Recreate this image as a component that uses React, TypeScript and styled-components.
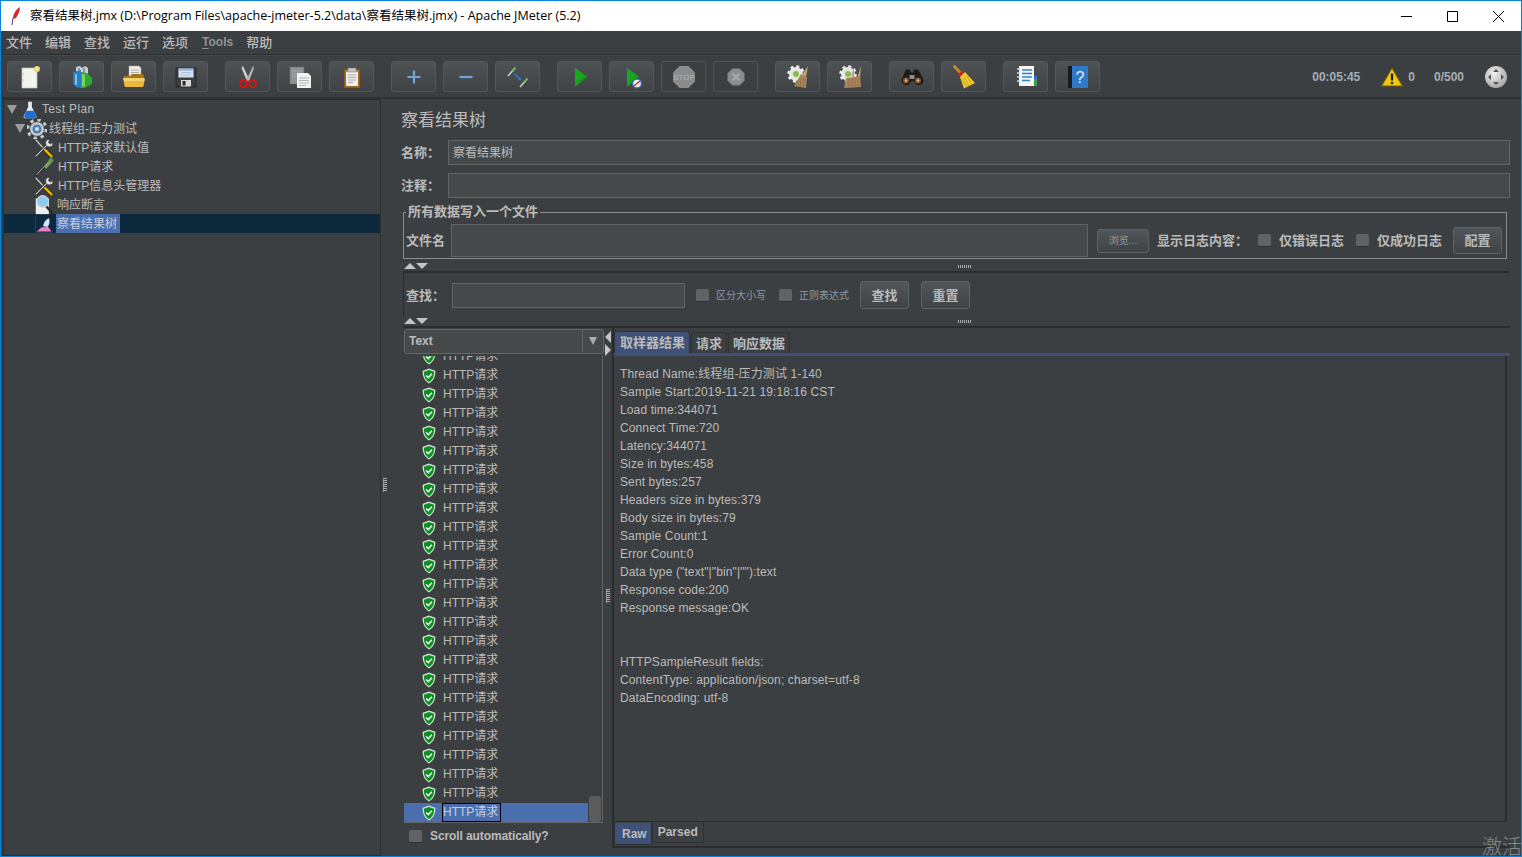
import React from "react";
import styled, { createGlobalStyle } from "styled-components";

const FONT = `"Liberation Sans", "Noto Sans CJK SC", sans-serif`;

const GlobalStyle = createGlobalStyle`
  html, body { margin: 0; padding: 0; background: #3c3f41; }
  body { font-family: ${FONT}; color: #bbbbbb; font-size: 12px; }
`;

// window frame
const Frame = styled.div`
  position: relative;
  box-sizing: border-box;
  width: 1522px;
  height: 857px;
  border: 1px solid #0a84d8;
  background: #3c3f41;
  display: flex;
  flex-direction: column;
  overflow: hidden;
`;
const TitleBar = styled.div`
  height: 30px;
  flex: none;
  background: #fff;
  display: flex;
  align-items: center;
  color: #000;
  font-family: "Open Sans", "Noto Sans CJK SC", sans-serif;
  font-size: 12.5px;
  padding-left: 8px;
`;
const TitleText = styled.span`
  margin-left: 7px;
  flex: 1;
  padding-bottom: 4px;
`;
const WinButton = styled.div`
  width: 46px;
  height: 30px;
  display: flex;
  align-items: center;
  justify-content: center;
`;
const MenuBar = styled.div`
  height: 24px;
  flex: none;
  box-sizing: border-box;
  display: flex;
  align-items: center;
  gap: 13px;
  padding: 0 0 2px 5px;
  border-bottom: 1px solid #2c2e2f;
  font-size: 13px;
`;
const MenuItem = styled.span<{ $dim?: boolean }>`
  color: ${(p) => (p.$dim ? "#8f9396" : "#bbbbbb")};
  font-weight: ${(p) => (p.$dim ? 700 : 500)};
  font-size: ${(p) => (p.$dim ? "12px" : "13px")};
  margin-left: ${(p) => (p.$dim ? 1 : 0)}px;
  u { text-underline-offset: 2px; }
`;
const ToolBar = styled.div`
  height: 44px;
  flex: none;
  box-sizing: border-box;
  display: flex;
  align-items: center;
  padding: 0 14px 0 6px;
  border-top: 1px solid #45484a;
  border-bottom: 2px solid #2e3031;
`;
const ToolGroup = styled.div`
  display: flex;
  gap: 7px;
  margin-right: 17px;
`;
const ToolButton = styled.div<{ $off?: boolean }>`
  box-sizing: border-box;
  width: 45px;
  height: 31px;
  border-radius: 3px;
  border: 1px solid ${(p) => (p.$off ? "#505456" : "#54585a")};
  background: ${(p) =>
    p.$off ? "#3c3f41" : "linear-gradient(#4d5254, #404345)"};
  display: flex;
  align-items: center;
  justify-content: center;
`;
const Status = styled.div`
  margin-left: auto;
  display: flex;
  align-items: center;
  color: #a4aeb8;
  font-size: 12px;
  font-weight: 700;
`;
const StatusText = styled.span<{ $gap: number; $left?: number }>`
  margin-right: ${(p) => p.$gap}px;
  margin-left: ${(p) => p.$left ?? 0}px;
`;

// main split
const Main = styled.div`
  flex: 1;
  display: flex;
  min-height: 0;
`;
const TreePane = styled.div`
  box-sizing: border-box;
  width: 378px;
  margin-left: 2px;
  border: 1px solid #2b2d2e;
`;
const TreeRow = styled.div<{ $depth: number; $selected?: boolean }>`
  display: flex;
  align-items: center;
  height: 19px;
  padding-left: ${(p) => p.$depth}px;
  background: ${(p) => (p.$selected ? "#0d293e" : "transparent")};
`;
const TreeLabel = styled.span<{ $selected?: boolean; $latin?: boolean }>`
  padding: 0 3px 0 1px;
  height: 19px;
  line-height: ${(p) => (p.$latin ? 19 : 21)}px;
  letter-spacing: ${(p) => (p.$latin ? ".35px" : "0")};
  white-space: nowrap;
  color: ${(p) => (p.$selected ? "#c5cfe0" : "#bbbbbb")};
  background: ${(p) => (p.$selected ? "#4b6eaf" : "transparent")};
`;
const IconSlot = styled.span<{ $left?: number; $right: number }>`
  display: flex;
  flex: none;
  margin: 0 ${(p) => p.$right}px 0 ${(p) => p.$left ?? 0}px;
`;
const Caret = styled.span`
  width: 0;
  height: 0;
  border-left: 5px solid transparent;
  border-right: 5px solid transparent;
  border-top: 9px solid #9a9c9e;
  margin-right: 2px;
`;
const VGrip = styled.div`
  width: 10px;
  flex: none;
  display: flex;
  align-items: center;
  justify-content: center;
  padding: 14px 2px 0 0;
  box-sizing: border-box;
`;
const GripV = styled.div`
  width: 3px;
  height: 14px;
  background: repeating-linear-gradient(#a9abad 0 1px, #3c3f41 1px 2px);
  border-left: 1px dotted #8b8d8f;
`;
const RightPane = styled.div`
  flex: 1;
  min-width: 0;
  display: flex;
  flex-direction: column;
  padding: 0 11px 0 10px;
`;
const PaneTitle = styled.div`
  font-size: 17px;
  height: 22px;
  line-height: 22px;
  margin: 11px 0 8px;
`;
const FormRow = styled.div`
  display: flex;
  align-items: center;
  height: 25px;
  margin-bottom: 8px;
`;
const Label = styled.span<{ $w?: number }>`
  font-size: 13px;
  font-weight: 700;
  white-space: nowrap;
  color: #bbbbbb;
  padding-bottom: 2px;
  ${(p) => (p.$w ? `width: ${p.$w}px; flex: none;` : "")}
`;
const TextBox = styled.div<{ $w?: number; $h?: number }>`
  box-sizing: border-box;
  background: #45494a;
  border: 1px solid #646464;
  height: ${(p) => p.$h ?? 25}px;
  color: #bbbbbb;
  line-height: 25px;
  padding-left: 4px;
  ${(p) => (p.$w ? `width: ${p.$w}px; flex: none;` : "flex: 1;")}
`;
const FieldSet = styled.fieldset`
  box-sizing: border-box;
  margin: -2px 3px 0 2px;
  height: 55px;
  padding: 3px 4px 0 2px;
  border: 1px solid #8a8c8e;
  min-inline-size: 0;
`;
const Legend = styled.legend`
  font-size: 13px;
  font-weight: 700;
  padding: 0 2px 1px;
  margin-left: 0;
  line-height: 16px;
`;
const FieldRow = styled.div`
  height: 33px;
  display: flex;
  align-items: center;
`;
const SmallButton = styled.div<{ $w: number; $h: number; $left: number; $small?: boolean }>`
  box-sizing: border-box;
  flex: none;
  width: ${(p) => p.$w}px;
  height: ${(p) => p.$h}px;
  margin-left: ${(p) => p.$left}px;
  padding-bottom: 2px;
  border: 1px solid #5e6264;
  border-radius: 3px;
  background: linear-gradient(#50565a, #3f4345);
  display: flex;
  align-items: center;
  justify-content: center;
  font-size: ${(p) => (p.$small ? 10 : 13)}px;
  font-weight: ${(p) => (p.$small ? 400 : 700)};
  color: ${(p) => (p.$small ? "#8f9aa0" : "#bbbbbb")};
`;
const Check = styled.span<{ $left: number }>`
  box-sizing: border-box;
  flex: none;
  width: 13px;
  height: 13px;
  margin-left: ${(p) => p.$left}px;
  background: #616263;
  border-radius: 2px;
  border-bottom: 1px solid #2f3031;
`;
const CheckText = styled.span<{ $left: number; $small?: boolean }>`
  margin-left: ${(p) => p.$left}px;
  padding-bottom: 2px;
  font-size: ${(p) => (p.$small ? 10 : 13)}px;
  font-weight: ${(p) => (p.$small ? 400 : 700)};
  color: ${(p) => (p.$small ? "#8e9aa6" : "#bbbbbb")};
  white-space: nowrap;
`;
const ScrollLabel = styled(CheckText)`
  font-size: 12px;
  letter-spacing: -0.1px;
  padding-bottom: 0;
`;
const HSplit = styled.div<{ $h: number; $top: number; $bottom: number }>`
  height: ${(p) => p.$h}px;
  flex: none;
  box-sizing: border-box;
  margin-left: 2px;
  padding: ${(p) => p.$top}px 538px ${(p) => p.$bottom}px 0;
  border-bottom: 2px solid #2a2c2d;
  display: flex;
  align-items: center;
  justify-content: space-between;
`;
const Arrows = styled.div`
  display: flex;
  margin-left: 1px;
`;
const ArrowUp = styled.span`
  width: 0;
  height: 0;
  border-left: 6px solid transparent;
  border-right: 6px solid transparent;
  border-bottom: 6px solid #c3c5c7;
`;
const ArrowDown = styled.span`
  width: 0;
  height: 0;
  border-left: 6px solid transparent;
  border-right: 6px solid transparent;
  border-top: 6px solid #c3c5c7;
`;
const GripH = styled.div`
  width: 14px;
  height: 3px;
  background: repeating-linear-gradient(90deg, #a9abad 0 1px, #3c3f41 1px 2px);
`;
const SearchRow = styled.div`
  height: 44px;
  flex: none;
  box-sizing: border-box;
  margin-left: 2px;
  padding-left: 2px;
  border-left: 1px solid #2a2c2d;
  display: flex;
  align-items: center;
`;

// results area
const Lower = styled.div`
  flex: 1;
  min-height: 0;
  display: flex;
  margin-left: 2px;
  padding-bottom: 1px;
`;
const ListCol = styled.div`
  width: 201px;
  flex: none;
  display: flex;
  flex-direction: column;
  padding-top: 1px;
  padding-left: 1px;
  box-sizing: border-box;
`;
const Combo = styled.div`
  box-sizing: border-box;
  height: 25px;
  flex: none;
  border: 1px solid #646668;
  border-radius: 3px;
  background: #45494a;
  display: flex;
  align-items: center;
  justify-content: space-between;
  font-weight: 700;
  padding: 0 0 1px 4px;
`;
const ComboArrow = styled.div`
  width: 20px;
  height: 100%;
  border-left: 1px solid #646668;
  display: flex;
  align-items: center;
  justify-content: center;
  &::after {
    content: "";
    border-left: 4px solid transparent;
    border-right: 4px solid transparent;
    border-top: 8px solid #a9abad;
  }
`;
const ListBox = styled.div`
  box-sizing: border-box;
  position: relative;
  height: 467px;
  margin: 2px 1px 1px 0;
  border-right: 1px solid #626466;
  border-bottom: 1px solid #626466;
  overflow: hidden;
  display: flex;
  flex-direction: column;
  justify-content: flex-end;
`;
const ResultRow = styled.div<{ $selected?: boolean }>`
  flex: none;
  height: 19px;
  margin-right: 14px;
  display: flex;
  align-items: center;
  padding-left: 18px;
  background: ${(p) => (p.$selected ? "#4b6eaf" : "transparent")};
`;
const ResultLabel = styled.span<{ $selected?: boolean }>`
  box-sizing: border-box;
  margin-left: 6px;
  height: 19px;
  line-height: 17px;
  padding: 0 2px 0 0;
  border: 1px solid ${(p) => (p.$selected ? "#000" : "transparent")};
  color: ${(p) => (p.$selected ? "#c5cfe0" : "#bbbbbb")};
`;
const Thumb = styled.div`
  position: absolute;
  right: 1px;
  bottom: 0;
  width: 12px;
  height: 26px;
  border-radius: 3px;
  background: #5a5c5e;
`;
const ScrollCheck = styled.div`
  display: flex;
  align-items: center;
  height: 24px;
  padding-left: 5px;
`;
const VSplit = styled.div`
  width: 8px;
  flex: none;
  display: flex;
  flex-direction: column;
  align-items: center;
  padding-top: 3px;
`;
const ArrowLeft = styled.span`
  width: 0;
  height: 0;
  margin: 0 1px 1px 0;
  border-top: 6px solid transparent;
  border-bottom: 6px solid transparent;
  border-right: 6px solid #c3c5c7;
`;
const ArrowRight = styled.span`
  width: 0;
  height: 0;
  margin: 0 1px 0 0;
  border-top: 6px solid transparent;
  border-bottom: 6px solid transparent;
  border-left: 6px solid #c3c5c7;
`;
const VSplitGrip = styled(GripV)`
  margin-top: 233px;
`;
const DetailCol = styled.div`
  flex: 1;
  min-width: 0;
  box-sizing: border-box;
  display: flex;
  flex-direction: column;
  border-left: 2px solid #2a2c2d;
  padding-top: 3px;
  margin-bottom: 7px;
  border-bottom: 2px solid #2a2c2d;
`;
const Tabs = styled.div`
  height: 22px;
  flex: none;
  display: flex;
  gap: 1px;
  align-items: flex-end;
`;
const Tab = styled.div<{ $active?: boolean }>`
  box-sizing: border-box;
  height: ${(p) => (p.$active ? 22 : 21)}px;
  padding: 0 4px ${(p) => (p.$active ? 3 : 1)}px ${(p) => (p.$active ? 5 : 4)}px;
  display: flex;
  align-items: center;
  font-size: 13px;
  font-weight: 700;
  border-radius: 3px 3px 0 0;
  border: 1px solid #2f3132;
  border-bottom: none;
  background: ${(p) => (p.$active ? "#3f5176" : "#3c3f41")};
  color: #bbbbbb;
`;
const TabLine = styled.div`
  height: 3px;
  flex: none;
  background: #3f5176;
`;
const Detail = styled.div`
  box-sizing: border-box;
  height: 466px;
  flex: none;
  margin-right: 3px;
  border-right: 2px solid #2a2c2d;
  border-bottom: 1px solid #2a2c2d;
  padding: 9px 0 0 6px;
  line-height: 18px;
  letter-spacing: 0.12px;
  white-space: pre;
`;
const BottomTabs = styled.div`
  display: flex;
  height: 23px;
`;
const BottomTab = styled.div<{ $active?: boolean }>`
  box-sizing: border-box;
  height: ${(p) => (p.$active ? 22 : 21)}px;
  padding: 0 ${(p) => (p.$active ? 4 : 5)}px 0 ${(p) => (p.$active ? 7 : 5)}px;
  margin-top: ${(p) => (p.$active ? 1 : 0)}px;
  display: flex;
  align-items: center;
  font-weight: 700;
  border-radius: 0 0 3px 3px;
  border: 1px solid #2f3132;
  border-top: none;
  background: ${(p) => (p.$active ? "#3f5176" : "#3c3f41")};
`;
const Watermark = styled.div`
  position: absolute;
  right: -1px;
  bottom: -3px;
  font-size: 20px;
  line-height: 24px;
  color: #85888a;
  font-weight: 300;
`;

// icons
const Ico = ({ children, size = 24 }: { children: React.ReactNode; size?: number }) => (
  <svg width={size} height={size} viewBox="0 0 24 24">
    {children}
  </svg>
);
const NewIcon = () => (
  <Ico>
    <path d="M4 3h15v20H4z" fill="#f4f4ee" stroke="#c4c4b8" strokeWidth=".7" />
    <circle cx="5.5" cy="9" r=".6" fill="#999" />
    <circle cx="5.5" cy="15" r=".6" fill="#999" />
    <circle cx="19" cy="4" r="3" fill="#ecd66a" />
    <circle cx="19" cy="4" r="1.4" fill="#fff6c0" />
  </Ico>
);
const TemplateIcon = () => (
  <Ico>
    <path d="M6 2l4-1 2 2 3-2 3 2v8H6z" fill="#c9cfd4" />
    <path d="M8 3h2v8H8zM13 3h2v8h-2z" fill="#8e979d" />
    <path d="M3 7l8-2v18l-5-1-3-3z" fill="#2a7fc0" />
    <path d="M5 9.500l2-.6V20l-2-.6z" fill="#7fc4ea" />
    <path d="M11 7l6 1 5 5v6l-7 4h-4z" fill="#2fa832" />
    <path d="M12 9l3 .6V21l-3 .8z" fill="#7dd35e" />
  </Ico>
);
const OpenIcon = () => (
  <Ico>
    <path d="M7 1h10l2 2v11H7z" fill="#eeeeea" stroke="#aaa" strokeWidth=".5" />
    <path d="M9 5h8M9 7.500h8M9 10h8" stroke="#9a9a9a" strokeWidth=".8" />
    <path d="M2 11h6l2-2h11l1 3v9H2z" fill="#a8761a" />
    <path d="M1 13h21l1 1-2 8H3z" fill="#edb93f" />
    <path d="M1 13h21l.5 3H2z" fill="#f5d271" />
  </Ico>
);
const SaveIcon = () => (
  <Ico>
    <path d="M2 3h20v19H2z" fill="#3a3d40" stroke="#1f2022" strokeWidth=".8" />
    <path d="M4.500 3.500h15v9h-15z" fill="#d6e2f2" />
    <path d="M4.500 3.500h15v2h-15z" fill="#8cb0dc" />
    <path d="M7 7.500h10M7 10h10" stroke="#a7b9d2" strokeWidth=".8" />
    <path d="M7 15h10v6.500H7z" fill="#d8d8d8" />
    <path d="M8.500 16h3v4.500h-3z" fill="#2a2a2a" />
  </Ico>
);
const CutIcon = () => (
  <Ico>
    <path d="M7 1l6.500 14-2.500 1L5.500 3z" fill="#d5d5d5" stroke="#888" strokeWidth=".4" />
    <path d="M17 1l-6.500 14 2.500 1 5-13z" fill="#bdbdbd" stroke="#777" strokeWidth=".4" />
    <circle cx="7.500" cy="18.500" r="3.600" fill="none" stroke="#d01818" strokeWidth="2.200" />
    <circle cx="16.500" cy="18.500" r="3.600" fill="none" stroke="#d01818" strokeWidth="2.200" />
  </Ico>
);
const CopyIcon = () => (
  <Ico>
    <path d="M2 2h14v17H2z" fill="#8f9294" stroke="#6d6f71" strokeWidth=".6" />
    <path d="M4 6h10M4 9h10M4 12h10" stroke="#a9abad" strokeWidth=".8" />
    <path d="M9 8h11l3 3v12H9z" fill="#f2f2f0" />
    <path d="M11 13h10M11 15.500h10M11 18h10M11 20.500h7" stroke="#a3a3a3" strokeWidth=".8" />
  </Ico>
);
const PasteIcon = () => (
  <Ico>
    <path d="M4 4h16v19H4z" fill="#a8661e" stroke="#6a3f10" strokeWidth=".6" />
    <path d="M6 6.500h12v14.500H6z" fill="#eeeeec" />
    <path d="M8 3h8v2l1 2H7l1-2z" fill="#c6c6c6" stroke="#777" strokeWidth=".5" />
    <path d="M8 10h8M8 12.500h8M8 15h8M8 17.500h5" stroke="#9a9a9a" strokeWidth=".8" />
  </Ico>
);
const PlusIcon = () => (
  <Ico>
    <path d="M5.500 12h13M12 5.500v13" stroke="#6fa5dd" strokeWidth="2.200" />
  </Ico>
);
const MinusIcon = () => (
  <Ico>
    <path d="M5.500 12h13" stroke="#6fa5dd" strokeWidth="2.200" />
  </Ico>
);
const ToggleIcon = () => (
  <Ico>
    <path d="M2 11l7-8" stroke="#c9cbc8" strokeWidth="1.700" />
    <path d="M6.500 6l3-3.500" stroke="#6fae62" strokeWidth="2" />
    <path d="M14 22l7-8" stroke="#c9cbc8" strokeWidth="1.700" />
    <path d="M18.500 17l3-3.500" stroke="#6fae62" strokeWidth="2" />
    <path d="M8.500 9l5.500 5" stroke="#2d7fe0" strokeWidth="1.400" />
    <path d="M15.500 15.500l-3.500-.5 2.500-2.500z" fill="#2d7fe0" />
  </Ico>
);
const PlayIcon = ({ small }: { small?: boolean }) => (
  <Ico>
    <defs>
      <linearGradient id="pl" x1="0" x2="1" y1="0" y2="1">
        <stop offset="0" stopColor="#25c325" />
        <stop offset="1" stopColor="#0a7d12" />
      </linearGradient>
    </defs>
    <path d="M7 3l12 9-12 10z" fill="url(#pl)" />
    <path d="M7 3l12 9H7z" fill="#17a81c" />
    {small && (
      <>
        <circle cx="17" cy="18.500" r="4.400" fill="#f2f2f2" stroke="#2e6fd0" strokeWidth="1.300" />
        <path d="M14 21l6-5" stroke="#d02020" strokeWidth="1.200" />
      </>
    )}
  </Ico>
);
const StopIcon = () => (
  <Ico>
    <path d="M7.500 1h9L23 7.500v9L16.500 23h-9L1 16.500v-9z" fill="#8b8b8b" />
    <text x="12" y="15" textAnchor="middle" fontSize="8" fontWeight="700" fontFamily="Liberation Sans" fill="#a6a6a6">
      STOP
    </text>
  </Ico>
);
const ShutIcon = () => (
  <Ico>
    <path d="M8.500 3.500h7l5 5v7l-5 5h-7l-5-5v-7z" fill="#8b8b8b" />
    <path d="M8.500 8.500l7 7M15.500 8.500l-7 7" stroke="#a9a9a9" strokeWidth="2.200" />
  </Ico>
);
const GearBase = () => (
  <>
    <circle cx="10" cy="9" r="7" fill="#e7e7e4" />
    <circle cx="10" cy="9" r="7.500" fill="none" stroke="#f0f0ec" strokeWidth="2.500" strokeDasharray="3 2.900" />
    <circle cx="10" cy="9" r="3" fill="#86c04c" />
  </>
);
const ClearIcon = () => (
  <Ico>
    <GearBase />
    <path d="M22 1l-6 9 4 2z" fill="#c0a47c" />
    <path d="M15 9l6 3-1 11-12-2z" fill="#a9855c" />
    <path d="M12 15l-1 7M15 13l-1 9M18 13l-1 10" stroke="#8b6a45" strokeWidth=".7" />
  </Ico>
);
const ClearAllIcon = () => (
  <Ico>
    <GearBase />
    <path d="M16 2l-3 9 3 1zM23 1l-4 12 3 1z" fill="#bfa27a" />
    <path d="M8 13l14-2 1 11-17 1z" fill="#a9855c" />
    <path d="M11 14v8M14 13v10M17 13v10M20 13v9" stroke="#8b6a45" strokeWidth=".7" />
  </Ico>
);
const BinocularsIcon = () => (
  <Ico>
    <path d="M6 4.500h4l1 3h2l1-3h4l5.500 10a4.800 4.800 0 1 1-9.500 1.500h-3a4.800 4.800 0 1 1-9.500-1.500z" fill="#1b1b1b" />
    <path d="M9.500 10h5v4h-5z" fill="#8c8c8c" />
    <circle cx="6" cy="15.500" r="3" fill="#8b5a34" />
    <circle cx="18" cy="15.500" r="3" fill="#8b5a34" />
    <circle cx="6" cy="15.500" r="1.200" fill="#d6b48e" />
    <circle cx="18" cy="15.500" r="1.200" fill="#d6b48e" />
  </Ico>
);
const BroomIcon = () => (
  <Ico>
    <path d="M2.500 1.500l6.500 7" stroke="#c08a30" strokeWidth="3" strokeLinecap="round" />
    <path d="M6 9.500l4-4 3 3-4 4z" fill="#d21f1f" />
    <path d="M8 12l5-5 10 11-11 5.500z" fill="#f0ca2e" />
    <path d="M12 12l5 9M10.500 14l4 8M15 11l4.500 8" stroke="#b79417" strokeWidth=".7" />
  </Ico>
);
const LogIcon = () => (
  <Ico>
    <path d="M5 1h15v20H5z" fill="#f6f6f6" />
    <path d="M8 5h10M8 8.500h10M8 12h10M8 15.500h8" stroke="#2d7fd8" strokeWidth="1.300" />
    <path d="M3 4h3M3 8h3M3 12h3M3 16h3" stroke="#d8d8d8" strokeWidth="1.500" />
    <path d="M20 14h3v7h-3z" fill="#39a04a" />
    <path d="M20 11h3v3h-3z" fill="#2d70c0" />
  </Ico>
);
const HelpIcon = () => (
  <Ico>
    <path d="M2 1h5v22H2z" fill="#181b20" />
    <path d="M6 1h16v22H6z" fill="#2f79c8" />
    <text x="14" y="17.500" textAnchor="middle" fontSize="16" fontFamily="Liberation Sans" fill="#e6f0fa">
      ?
    </text>
  </Ico>
);
const WarnIcon = () => (
  <svg width="22" height="20" viewBox="0 0 22 20">
    <path d="M11 1l10.500 18H.5z" fill="#f2c80f" stroke="#6d5a10" strokeWidth="1.200" />
    <path d="M11 6.500v7" stroke="#1b1b1b" strokeWidth="2.200" />
    <circle cx="11" cy="16" r="1.300" fill="#1b1b1b" />
  </svg>
);
const RemoteIcon = () => (
  <svg width="22" height="22" viewBox="0 0 22 22">
    <defs>
      <radialGradient id="rm" cx=".4" cy=".35" r=".8">
        <stop offset="0" stopColor="#f0f0f0" />
        <stop offset="1" stopColor="#9a9a9a" />
      </radialGradient>
    </defs>
    <circle cx="11" cy="11" r="11" fill="url(#rm)" />
    <path d="M11 3l3 3H8zM11 19l3-3H8zM3 11l3-3v6zM19 11l-3-3v6z" fill="#555" />
  </svg>
);
const ShieldIcon = () => (
  <svg width="14" height="16" viewBox="0 0 14 16">
    <path d="M7 .5l6.300 2.200c.3 5.500-1.500 9.800-6.300 12.800C2.200 12.500.4 8.200.7 2.700z" fill="#d6e0d2" />
    <path d="M7 2l5 1.800c.2 4.500-1.200 8-5 10.300C3.200 11.800 1.800 8.300 2 3.800z" fill="#0b8f22" />
    <path d="M4.200 7.500l2.100 2.200 3.600-4" fill="none" stroke="#fff" strokeWidth="1.500" />
  </svg>
);
const FlaskIcon = () => (
  <Ico size={18}>
    <path d="M9.500 1h5v7l6 12c.5 1.500-.5 3-2 3h-13c-1.500 0-2.500-1.500-2-3l6-12z" fill="#e8ecf0" />
    <path d="M6.500 13h11l3 8-1.500 2h-13L4 21z" fill="#1f6fd0" />
  </Ico>
);
const TreeGearIcon = () => (
  <Ico size={20}>
    <circle cx="12" cy="12" r="11" fill="none" stroke="#c9cbcd" strokeWidth="3.500" strokeDasharray="4 4.640" />
    <circle cx="12" cy="12" r="8.500" fill="#c9cbcd" stroke="#6f7173" strokeWidth=".5" />
    <circle cx="12" cy="12" r="5.500" fill="#4a7fb8" />
    <circle cx="12" cy="12" r="2.500" fill="#d6dde4" />
  </Ico>
);
const ToolsIcon = () => (
  <Ico size={20}>
    <path d="M2 2l10 11" stroke="#d8d8d8" strokeWidth="1.500" />
    <path d="M12 13l9 9" stroke="#1f1f1f" strokeWidth="4.600" strokeLinecap="round" />
    <path d="M12 13l9 9" stroke="#e8b80c" strokeWidth="3" strokeLinecap="round" />
    <path d="M2 22L17 7" stroke="#1f1f1f" strokeWidth="3" />
    <path d="M2 22L17 7" stroke="#d8d8d8" strokeWidth="1.400" />
    <path d="M15 9a5 5 0 0 1 1-7l3 .5-2 2.500 2.500 2.500 2.500-2 .5 3a5 5 0 0 1-7.500.5z" fill="#e3e3e3" stroke="#333" strokeWidth=".5" />
  </Ico>
);
const PipetteIcon = () => (
  <Ico size={20}>
    <path d="M2 23l12-13" stroke="#2a2a2a" strokeWidth="3" />
    <path d="M3 21.500l9-10" stroke="#b9bcbe" strokeWidth="1.200" />
    <path d="M11.500 11l7-7.500 3 3-7 7.500z" fill="#6fa85a" />
    <circle cx="20.500" cy="4" r="2.800" fill="#5c9a48" />
  </Ico>
);
const AssertIcon = () => (
  <Ico size={21}>
    <path d="M2 5h15v18H2z" fill="#eceef0" />
    <path d="M13 13l9 10" stroke="#2a2a2a" strokeWidth="2.600" />
    <circle cx="10" cy="8.500" r="6.500" fill="#8ccbf0" stroke="#c9d3d8" strokeWidth="1.600" />
  </Ico>
);
const ChartIcon = () => (
  <Ico size={20}>
    <path d="M2 2v20h20" fill="none" stroke="#4a4f55" strokeWidth="1" strokeDasharray="2 1" />
    <path d="M3 21c3-1 5-6 8-5 2 .6 3-1 5-2l5 7z" fill="#ec7fc4" />
    <path d="M11 15c0-4 3-9 7-10 1 4 1 8-2 10z" fill="#cfe6f5" />
  </Ico>
);

// data
const toolGroups: { icon: React.ReactNode; off?: boolean }[][] = [
  [{ icon: <NewIcon /> }, { icon: <TemplateIcon /> }, { icon: <OpenIcon /> }, { icon: <SaveIcon /> }],
  [{ icon: <CutIcon /> }, { icon: <CopyIcon /> }, { icon: <PasteIcon /> }],
  [{ icon: <PlusIcon /> }, { icon: <MinusIcon /> }, { icon: <ToggleIcon /> }],
  [
    { icon: <PlayIcon /> },
    { icon: <PlayIcon small /> },
    { icon: <StopIcon />, off: true },
    { icon: <ShutIcon />, off: true },
  ],
  [{ icon: <ClearIcon /> }, { icon: <ClearAllIcon /> }],
  [{ icon: <BinocularsIcon /> }, { icon: <BroomIcon /> }],
  [{ icon: <LogIcon /> }, { icon: <HelpIcon /> }],
];
const menus = ["文件", "编辑", "查找", "运行", "选项"];
const sampleText = `Thread Name:线程组-压力测试 1-140
Sample Start:2019-11-21 19:18:16 CST
Load time:344071
Connect Time:720
Latency:344071
Size in bytes:458
Sent bytes:257
Headers size in bytes:379
Body size in bytes:79
Sample Count:1
Error Count:0
Data type ("text"|"bin"|""):text
Response code:200
Response message:OK


HTTPSampleResult fields:
ContentType: application/json; charset=utf-8
DataEncoding: utf-8`;

export default function App() {
  const rows = Array.from({ length: 25 }, (_, i) => i);
  return (
    <Frame>
      <GlobalStyle />
      <TitleBar>
        <svg width="14" height="20" viewBox="0 0 14 20">
          <path d="M11 1C6 4 4 9 4 13l3-1c2-3 4-7 4-11z" fill="#d6262c" />
          <path d="M4 12L3 19" stroke="#5a3a6a" strokeWidth="1" />
        </svg>
        <TitleText>察看结果树.jmx (D:\Program Files\apache-jmeter-5.2\data\察看结果树.jmx) - Apache JMeter (5.2)</TitleText>
        <WinButton>
          <svg width="11" height="11"><path d="M0 5.500h11" stroke="#000" /></svg>
        </WinButton>
        <WinButton>
          <svg width="11" height="11"><path d="M.5.500h10v10H.5z" fill="none" stroke="#000" /></svg>
        </WinButton>
        <WinButton>
          <svg width="11" height="11"><path d="M0 0l11 11M11 0L0 11" stroke="#000" /></svg>
        </WinButton>
      </TitleBar>
      <MenuBar>
        {menus.map((m) => (
          <MenuItem key={m}>{m}</MenuItem>
        ))}
        <MenuItem $dim>
          <u>T</u>ools
        </MenuItem>
        <MenuItem>帮助</MenuItem>
      </MenuBar>
      <ToolBar>
        {toolGroups.map((group, i) => (
          <ToolGroup key={i}>
            {group.map((b, j) => (
              <ToolButton key={j} $off={b.off}>
                {b.icon}
              </ToolButton>
            ))}
          </ToolGroup>
        ))}
        <Status>
          <StatusText $gap={21}>00:05:45</StatusText>
          <WarnIcon />
          <StatusText $gap={19} $left={5}>0</StatusText>
          <StatusText $gap={21}>0/500</StatusText>
          <RemoteIcon />
        </Status>
      </ToolBar>
      <Main>
        <TreePane>
          <TreeRow $depth={3}>
            <Caret />
            <IconSlot $left={2} $right={2}>
              <FlaskIcon />
            </IconSlot>
            <TreeLabel $latin>Test Plan</TreeLabel>
          </TreeRow>
          <TreeRow $depth={11}>
            <Caret />
            <IconSlot $right={1}>
              <TreeGearIcon />
            </IconSlot>
            <TreeLabel>线程组-压力测试</TreeLabel>
          </TreeRow>
          <TreeRow $depth={30}>
            <IconSlot $right={3}>
              <ToolsIcon />
            </IconSlot>
            <TreeLabel>HTTP请求默认值</TreeLabel>
          </TreeRow>
          <TreeRow $depth={30}>
            <IconSlot $right={3}>
              <PipetteIcon />
            </IconSlot>
            <TreeLabel>HTTP请求</TreeLabel>
          </TreeRow>
          <TreeRow $depth={30}>
            <IconSlot $right={3}>
              <ToolsIcon />
            </IconSlot>
            <TreeLabel>HTTP信息头管理器</TreeLabel>
          </TreeRow>
          <TreeRow $depth={30}>
            <IconSlot $right={1}>
              <AssertIcon />
            </IconSlot>
            <TreeLabel>响应断言</TreeLabel>
          </TreeRow>
          <TreeRow $depth={30} $selected>
            <IconSlot $right={2}>
              <ChartIcon />
            </IconSlot>
            <TreeLabel $selected>察看结果树</TreeLabel>
          </TreeRow>
        </TreePane>
        <VGrip>
          <GripV />
        </VGrip>
        <RightPane>
          <PaneTitle>察看结果树</PaneTitle>
          <FormRow>
            <Label $w={47}>名称：</Label>
            <TextBox>察看结果树</TextBox>
          </FormRow>
          <FormRow>
            <Label $w={47}>注释：</Label>
            <TextBox />
          </FormRow>
          <FieldSet>
            <Legend>所有数据写入一个文件</Legend>
            <FieldRow>
              <Label $w={45}>文件名</Label>
              <TextBox $w={637} $h={33} />
              <SmallButton $w={52} $h={24} $left={9} $small>浏览...</SmallButton>
              <CheckText $left={8}>显示日志内容：</CheckText>
              <Check $left={10} />
              <CheckText $left={8}>仅错误日志</CheckText>
              <Check $left={12} />
              <CheckText $left={8}>仅成功日志</CheckText>
              <SmallButton $w={49} $h={27} $left={11}>配置</SmallButton>
            </FieldRow>
          </FieldSet>
          <HSplit $h={14} $top={2} $bottom={0}>
            <Arrows>
              <ArrowUp />
              <ArrowDown />
            </Arrows>
            <GripH />
          </HSplit>
          <SearchRow>
            <Label $w={46}>查找：</Label>
            <TextBox $w={233} />
            <Check $left={11} />
            <CheckText $left={7} $small>区分大小写</CheckText>
            <Check $left={13} />
            <CheckText $left={7} $small>正则表达式</CheckText>
            <SmallButton $w={49} $h={28} $left={11}>查找</SmallButton>
            <SmallButton $w={49} $h={28} $left={12}>重置</SmallButton>
          </SearchRow>
          <HSplit $h={11} $top={0} $bottom={1}>
            <Arrows>
              <ArrowUp />
              <ArrowDown />
            </Arrows>
            <GripH />
          </HSplit>
          <Lower>
            <ListCol>
              <Combo>
                Text
                <ComboArrow />
              </Combo>
              <ListBox>
                {rows.map((r) => (
                  <ResultRow key={r} $selected={r === 24}>
                    <ShieldIcon />
                    <ResultLabel $selected={r === 24}>HTTP请求</ResultLabel>
                  </ResultRow>
                ))}
                <Thumb />
              </ListBox>
              <ScrollCheck>
                <Check $left={0} />
                <ScrollLabel $left={8}>Scroll automatically?</ScrollLabel>
              </ScrollCheck>
            </ListCol>
            <VSplit>
              <ArrowLeft />
              <ArrowRight />
              <VSplitGrip />
            </VSplit>
            <DetailCol>
              <Tabs>
                <Tab $active>取样器结果</Tab>
                <Tab>请求</Tab>
                <Tab>响应数据</Tab>
              </Tabs>
              <TabLine />
              <Detail>{sampleText}</Detail>
              <BottomTabs>
                <BottomTab $active>Raw</BottomTab>
                <BottomTab>Parsed</BottomTab>
              </BottomTabs>
            </DetailCol>
          </Lower>
        </RightPane>
      </Main>
      <Watermark>激活</Watermark>
    </Frame>
  );
}
